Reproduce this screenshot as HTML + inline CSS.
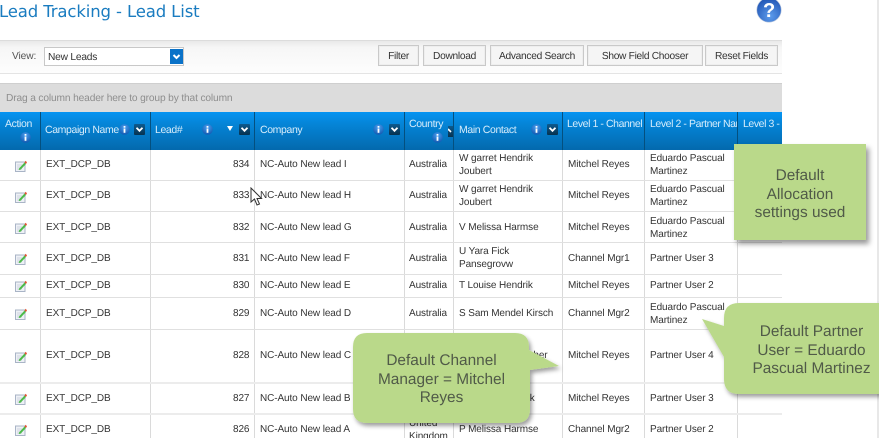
<!DOCTYPE html>
<html><head><meta charset="utf-8">
<style>
html,body{margin:0;padding:0;background:#fff;}
#p{position:relative;width:879px;height:438px;overflow:hidden;background:#fff;font-family:"Liberation Sans",sans-serif;font-size:10px;letter-spacing:-.1px;color:#333;text-rendering:geometricPrecision;}
#p div,#p svg.a{position:absolute;}
.t{white-space:nowrap;line-height:13px;}
.h{color:#d6ecfb;font-size:10.5px;letter-spacing:-.38px;white-space:nowrap;line-height:13px;}
.b{background:#f5f5f5;border:1px solid #c9c9c9;box-shadow:0 0 0 1px #eee inset;font-size:10.2px;letter-spacing:-.3px;text-align:center;line-height:21px;height:19px;color:#333;box-sizing:content-box;}
.v{background:#dadada;width:1px;top:150px;height:288px;}
.r{background:#e0e0e0;left:0;width:782px;height:1px;}
.hl{background:#04507f;width:1px;top:112px;height:38px;}
.call{color:#505a48;font-size:15.4px;letter-spacing:0;line-height:18.5px;text-align:center;}
</style></head><body><div id="p">
<svg width="0" height="0" style="position:absolute"><defs>
<radialGradient id="ig" cx=".5" cy=".3" r=".8"><stop offset="0" stop-color="#4aa0f0"/><stop offset="1" stop-color="#0b4fa8"/></radialGradient>
<linearGradient id="dg" x1="0" y1="0" x2="0" y2="1"><stop offset="0" stop-color="#0d5a8e"/><stop offset="1" stop-color="#07324f"/></linearGradient>
<symbol id="i" viewBox="0 0 11 11"><circle cx="5.5" cy="5.5" r="5.3" fill="url(#ig)"/><rect x="4.6" y="2" width="1.8" height="1.7" fill="#fff"/><rect x="4.6" y="4.5" width="1.8" height="4.3" fill="#fff"/></symbol>
<symbol id="d" viewBox="0 0 11 11"><rect width="11" height="11" rx="1" fill="url(#dg)"/><path d="M2.5 3.8 5.5 6.8 8.5 3.8" fill="none" stroke="#fff" stroke-width="1.8"/></symbol>
<symbol id="e" viewBox="0 0 12 12"><rect x=".5" y="2" width="9.5" height="9.5" fill="#eef1f6" stroke="#a9b4c6"/><path d="M2 5h5M2 7h4M2 9h5" stroke="#c3cad6" stroke-width=".8"/><path d="M4 8.5 9.5 2.5 11 4 5.5 9.7 3.7 10z" fill="#4cbb4a"/><path d="M9.5 2.5 10.6.8 12 2.2 11 4z" fill="#e2502f"/></symbol>
<filter id="s" x="-10%" y="-10%" width="125%" height="130%"><feDropShadow dx="2" dy="3" stdDeviation="2.2" flood-color="#000" flood-opacity=".38"/></filter>
</defs></svg>

<div class="t" style="left:-1px;top:1px;font-family:'DejaVu Sans',sans-serif;font-size:16.5px;line-height:22px;letter-spacing:-.13px;color:#1a7cc0;">Lead Tracking - Lead List</div>

<svg class="a" style="left:756px;top:-3px" width="26" height="26" viewBox="0 0 26 26"><defs><radialGradient id="q" cx=".55" cy=".75" r=".8"><stop offset="0" stop-color="#5d9cec"/><stop offset="1" stop-color="#1c4fb0"/></radialGradient></defs><circle cx="13" cy="13" r="12.2" fill="url(#q)" stroke="#b5c4dc" stroke-width=".6"/><text x="13" y="20" font-family="Liberation Sans" font-weight="bold" font-size="20" text-anchor="middle" fill="#fff">?</text></svg>

<div style="left:0;top:40px;width:782px;height:34px;background:linear-gradient(#e9e9e9,#f6f6f6 20%,#fdfdfd);border-top:1px solid #dcdcdc;border-bottom:1px solid #e4e4e4;box-sizing:border-box"></div>
<div class="t" style="left:12px;top:50px;color:#555;font-size:10.2px">View:</div>
<div style="left:44px;top:47px;width:140px;height:19px;background:#fff;border:1px solid #c8c8c8;box-sizing:border-box"></div>
<div class="t" style="left:48px;top:51px;font-size:10.2px;color:#333;letter-spacing:-.2px">New Leads</div>
<svg class="a" style="left:170px;top:49px" width="13" height="15" viewBox="0 0 13 15"><rect width="13" height="15" fill="#0a72c8"/><path d="M3.5 6 6.5 9 9.5 6" fill="none" stroke="#fff" stroke-width="2"/></svg>

<div class="b" style="left:378px;top:45px;width:39px">Filter</div>
<div class="b" style="left:423px;top:45px;width:61px">Download</div>
<div class="b" style="left:490px;top:45px;width:92px">Advanced Search</div>
<div class="b" style="left:587px;top:45px;width:114px">Show Field Chooser</div>
<div class="b" style="left:705px;top:45px;width:71px">Reset Fields</div>

<div style="left:0;top:83px;width:782px;height:29px;background:#dcdcdc;border-top:1px solid #cfcfcf;box-sizing:border-box"></div>
<div class="t" style="left:6px;top:92px;color:#8e8e8e;font-size:10.2px;letter-spacing:-.14px">Drag a column header here to group by that column</div>

<div style="left:0;top:112px;width:782px;height:38px;background:linear-gradient(#0594f2,#0585d8 30%,#0369ad)"></div>
<div class="hl" style="left:40px"></div><div class="hl" style="left:150px"></div><div class="hl" style="left:254px"></div><div class="hl" style="left:404px"></div><div class="hl" style="left:453px"></div><div class="hl" style="left:562px"></div><div class="hl" style="left:644px"></div><div class="hl" style="left:737px"></div>

<div class="h" style="left:5px;top:118px">Action</div>
<svg class="a" style="left:20px;top:132px" width="11" height="11"><use href="#i"/></svg>
<div class="h" style="left:45px;top:124px">Campaign Name</div>
<svg class="a" style="left:119px;top:124px" width="11" height="11"><use href="#i"/></svg>
<svg class="a" style="left:134px;top:124px" width="11" height="11"><use href="#d"/></svg>
<div class="h" style="left:155px;top:124px">Lead#</div>
<svg class="a" style="left:202px;top:124px" width="11" height="11"><use href="#i"/></svg>
<svg class="a" style="left:227px;top:126px" width="6" height="5"><path d="M0 0H6L3 5z" fill="#fff"/></svg>
<svg class="a" style="left:239px;top:124px" width="11" height="11"><use href="#d"/></svg>
<div class="h" style="left:260px;top:124px">Company</div>
<svg class="a" style="left:373px;top:124px" width="11" height="11"><use href="#i"/></svg>
<svg class="a" style="left:389px;top:124px" width="11" height="11"><use href="#d"/></svg>
<div class="h" style="left:409px;top:118px">Country</div>
<svg class="a" style="left:432px;top:132px" width="11" height="11"><use href="#i"/></svg>
<svg class="a" style="left:448px;top:126px" width="5" height="11" viewBox="0 0 5 11"><rect width="5" height="11" fill="url(#dg)"/><path d="M0 3 3 6" stroke="#fff" stroke-width="1.6"/></svg>
<div class="h" style="left:459px;top:124px">Main Contact</div>
<svg class="a" style="left:531px;top:124px" width="11" height="11"><use href="#i"/></svg>
<svg class="a" style="left:547px;top:124px" width="11" height="11"><use href="#d"/></svg>
<div class="h" style="left:567px;top:118px;letter-spacing:-.42px">Level 1 - Channel</div>
<div class="h" style="left:650px;top:118px;width:87px;overflow:hidden;letter-spacing:-.42px">Level 2 - Partner Name</div>
<div class="h" style="left:743px;top:118px;width:39px;overflow:hidden;letter-spacing:-.42px">Level 3 - Partner</div>

<div class="v" style="left:40px"></div><div class="v" style="left:150px"></div><div class="v" style="left:254px"></div><div class="v" style="left:404px"></div><div class="v" style="left:453px"></div><div class="v" style="left:562px"></div><div class="v" style="left:644px"></div><div class="v" style="left:737px"></div>
<div class="r" style="top:180px"></div><div class="r" style="top:211px"></div><div class="r" style="top:242px"></div><div class="r" style="top:274px"></div><div class="r" style="top:297px"></div><div class="r" style="top:329px"></div><div class="r" style="top:382px;height:2px;background:#ececec"></div><div class="r" style="top:413px;height:2px;background:#ececec"></div>

<svg class="a" style="left:15px;top:160px" width="12" height="12"><use href="#e"/></svg>
<svg class="a" style="left:15px;top:191px" width="12" height="12"><use href="#e"/></svg>
<svg class="a" style="left:15px;top:222px" width="12" height="12"><use href="#e"/></svg>
<svg class="a" style="left:15px;top:253px" width="12" height="12"><use href="#e"/></svg>
<svg class="a" style="left:15px;top:280px" width="12" height="12"><use href="#e"/></svg>
<svg class="a" style="left:15px;top:308px" width="12" height="12"><use href="#e"/></svg>
<svg class="a" style="left:15px;top:351px" width="12" height="12"><use href="#e"/></svg>
<svg class="a" style="left:15px;top:393px" width="12" height="12"><use href="#e"/></svg>
<svg class="a" style="left:15px;top:424px" width="12" height="12"><use href="#e"/></svg>

<div class="t" style="left:46px;top:158px">EXT_DCP_DB</div><div class="t" style="left:233px;top:158px">834</div><div class="t" style="left:260px;top:158px">NC-Auto New lead I</div><div class="t" style="left:409px;top:158px">Australia</div><div class="t" style="left:459px;top:152px">W garret Hendrik<br>Joubert</div><div class="t" style="left:568px;top:158px">Mitchel Reyes</div><div class="t" style="left:650px;top:152px">Eduardo Pascual<br>Martinez</div>

<div class="t" style="left:46px;top:189px">EXT_DCP_DB</div><div class="t" style="left:233px;top:189px">833</div><div class="t" style="left:260px;top:189px">NC-Auto New lead H</div><div class="t" style="left:409px;top:189px">Australia</div><div class="t" style="left:459px;top:183px">W garret Hendrik<br>Joubert</div><div class="t" style="left:568px;top:189px">Mitchel Reyes</div><div class="t" style="left:650px;top:183px">Eduardo Pascual<br>Martinez</div>

<div class="t" style="left:46px;top:221px">EXT_DCP_DB</div><div class="t" style="left:233px;top:221px">832</div><div class="t" style="left:260px;top:221px">NC-Auto New lead G</div><div class="t" style="left:409px;top:221px">Australia</div><div class="t" style="left:459px;top:221px">V Melissa Harmse</div><div class="t" style="left:568px;top:221px">Mitchel Reyes</div><div class="t" style="left:650px;top:215px">Eduardo Pascual<br>Martinez</div>

<div class="t" style="left:46px;top:252px">EXT_DCP_DB</div><div class="t" style="left:233px;top:252px">831</div><div class="t" style="left:260px;top:252px">NC-Auto New lead F</div><div class="t" style="left:409px;top:252px">Australia</div><div class="t" style="left:459px;top:245px">U Yara Fick<br>Pansegrovw</div><div class="t" style="left:568px;top:252px">Channel Mgr1</div><div class="t" style="left:650px;top:252px">Partner User 3</div>

<div class="t" style="left:46px;top:279px">EXT_DCP_DB</div><div class="t" style="left:233px;top:279px">830</div><div class="t" style="left:260px;top:279px">NC-Auto New lead E</div><div class="t" style="left:409px;top:279px">Australia</div><div class="t" style="left:459px;top:279px">T Louise Hendrik</div><div class="t" style="left:568px;top:279px">Mitchel Reyes</div><div class="t" style="left:650px;top:279px">Partner User 2</div>

<div class="t" style="left:46px;top:307px">EXT_DCP_DB</div><div class="t" style="left:233px;top:307px">829</div><div class="t" style="left:260px;top:307px">NC-Auto New lead D</div><div class="t" style="left:409px;top:307px">Australia</div><div class="t" style="left:459px;top:307px">S Sam Mendel Kirsch</div><div class="t" style="left:568px;top:307px">Channel Mgr2</div><div class="t" style="left:650px;top:301px">Eduardo Pascual<br>Martinez</div>

<div class="t" style="left:46px;top:349px">EXT_DCP_DB</div><div class="t" style="left:233px;top:349px">828</div><div class="t" style="left:260px;top:349px">NC-Auto New lead C</div><div class="t" style="left:459px;top:349px">S Tanya Mia Fischer</div><div class="t" style="left:568px;top:349px">Mitchel Reyes</div><div class="t" style="left:650px;top:349px">Partner User 4</div>

<div class="t" style="left:46px;top:392px">EXT_DCP_DB</div><div class="t" style="left:233px;top:392px">827</div><div class="t" style="left:260px;top:392px">NC-Auto New lead B</div><div class="t" style="left:459px;top:392px">S Nolan Kendrick</div><div class="t" style="left:568px;top:392px">Mitchel Reyes</div><div class="t" style="left:650px;top:392px">Partner User 3</div>

<div class="t" style="left:46px;top:423px">EXT_DCP_DB</div><div class="t" style="left:233px;top:423px">826</div><div class="t" style="left:260px;top:423px">NC-Auto New lead A</div><div class="t" style="left:409px;top:417px">United<br>Kingdom</div><div class="t" style="left:459px;top:423px">P Melissa Harmse</div><div class="t" style="left:568px;top:423px">Channel Mgr2</div><div class="t" style="left:650px;top:423px">Partner User 2</div>

<svg class="a" style="left:250px;top:187px" width="13" height="20" viewBox="0 0 13 20"><path d="M1 1V15L4.5 12 7 18 9.5 17 7 11.5 11.5 11.5z" fill="#fff" stroke="#333" stroke-width="1"/></svg>

<div style="left:877px;top:0;width:2px;height:438px;background:#e8e8e8"></div>

<div style="left:734px;top:144px;width:132px;height:96px;background:#bad98a;box-shadow:3px 4px 5px rgba(0,0,0,.4)"></div>
<div class="call" style="left:734px;top:167px;width:132px">Default<br>Allocation<br>settings used</div>

<svg class="a" style="left:340px;top:320px" width="240" height="118" viewBox="0 0 240 118"><path d="M27 13H175Q189 13 189 27V30L219 46 190 50V89Q190 103 176 103H27Q13 103 13 89V27Q13 13 27 13z" fill="#bad98a" filter="url(#s)"/></svg>
<div class="call" style="left:353px;top:352px;width:177px">Default Channel<br>Manager = Mitchel<br>Reyes</div>

<svg class="a" style="left:695px;top:295px" width="184" height="143" viewBox="0 0 184 143"><path d="M44 8H190V99H44Q29 99 29 84V62L7 24 29 31V23Q29 8 44 8z" fill="#bad98a" filter="url(#s)"/></svg>
<div class="call" style="left:734px;top:323px;width:155px">Default Partner<br>User = Eduardo<br>Pascual Martinez</div>

</div></body></html>
